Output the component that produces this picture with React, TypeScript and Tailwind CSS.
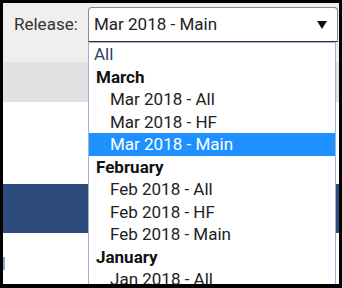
const groups = [
  { month: "March", short: "Mar" },
  { month: "February", short: "Feb" },
  { month: "January", short: "Jan" },
];

const kinds = ["All", "HF", "Main"];

export default function App() {
  const selected = "Mar 2018 - Main";

  return (
    <div className="h-[288px] w-[342px] bg-black pb-[4px] pl-[3px] pr-[3px] pt-[3px] font-['Roboto',sans-serif]">
      <div className="relative flex h-full flex-col overflow-hidden bg-white">
        {/* toolbar */}
        <div className="flex h-[59px] items-start bg-[#efefef] pl-[11px] pt-[4px]">
          <label className="flex h-[35px] w-[74px] items-center text-[17px] text-[#333]">
            Release:
          </label>
          <div className="flex h-[35px] w-[250px] items-center justify-between rounded-t-[4px] border border-[#8a8a8a] border-b-[#333] bg-white pl-[5px] pr-[10px] text-[17px] text-[#222]">
            <span>{selected}</span>
            <svg width="10" height="8" viewBox="0 0 10 8">
              <path d="M0 0 H10 L5 8 Z" fill="#111" />
            </svg>
          </div>
        </div>
        <div className="h-[40px] bg-[#e2e2e2]" />
        <div className="h-[82px] bg-white" />
        <div className="h-[49px] bg-[#2e4b7d]" />
        <div className="relative flex-1 bg-white">
          <div className="absolute left-0 top-[24px] h-[13px] w-[2px] bg-[#7fb0e0]" />
        </div>

        {/* open listbox */}
        <ul className="absolute left-[85px] top-[39px] w-[248px] border border-[#9db3d8] bg-white text-[17px] leading-[22.5px] text-[#222]">
          <li className="pl-[5px] text-[#2b3f63]">All</li>
          {groups.map((g) => (
            <li key={g.month}>
              <div className="pl-[7px] font-bold text-[#111]">{g.month}</div>
              {kinds.map((k) => {
                const label = `${g.short} 2018 - ${k}`;
                const active = label === selected;
                return (
                  <div
                    key={k}
                    className={
                      active
                        ? "bg-[#1e90ff] pl-[21px] text-white"
                        : "pl-[21px] text-[#222]"
                    }
                  >
                    {label}
                  </div>
                );
              })}
            </li>
          ))}
        </ul>
      </div>
    </div>
  );
}
